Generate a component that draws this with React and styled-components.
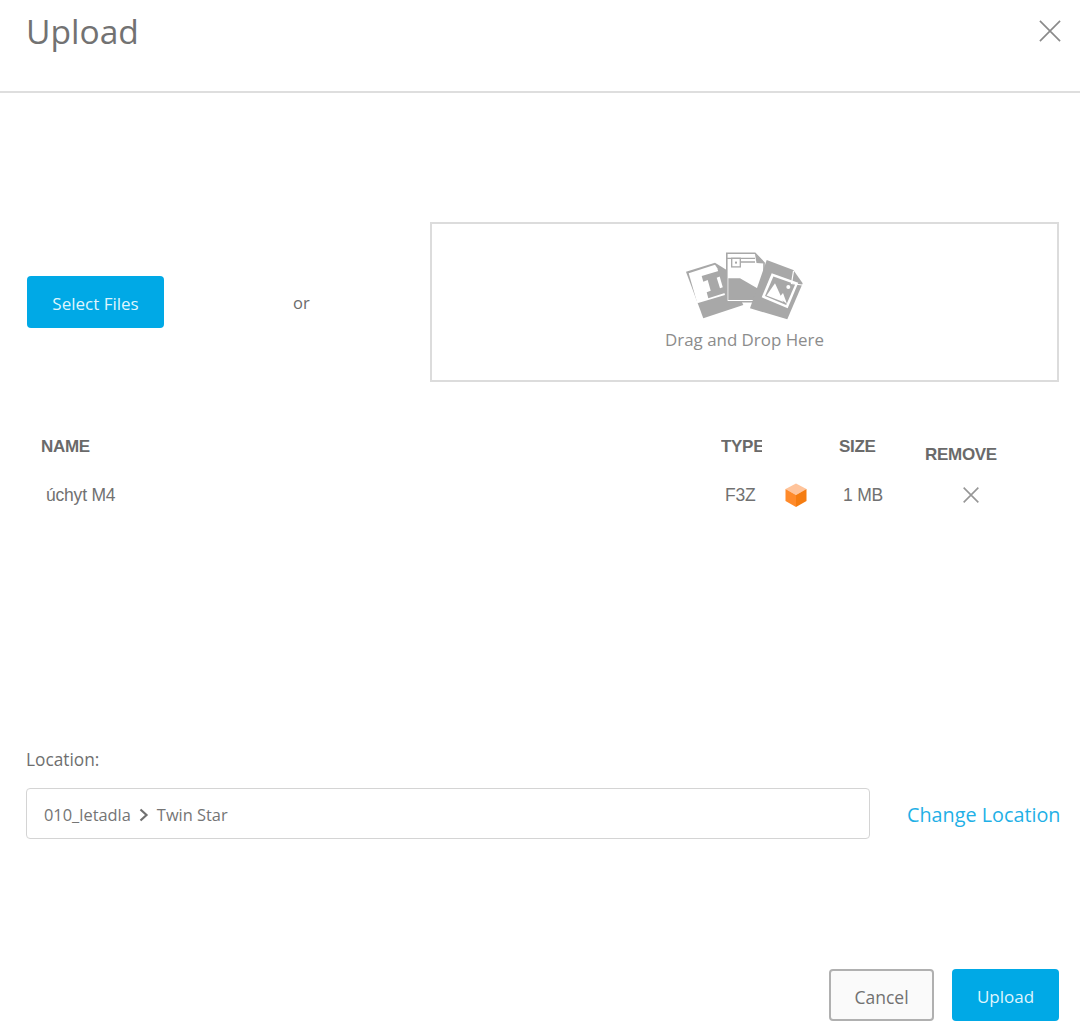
import React from "react";
import styled, { createGlobalStyle } from "styled-components";

const Global = createGlobalStyle`
  html, body { margin: 0; padding: 0; background: #fff; }
  body { font-family: "Open Sans", "Noto Sans", sans-serif; color: #6b6b6b; }
`;

const Page = styled.div`
  width: 1080px;
  height: 1035px;
  display: flex;
  flex-direction: column;
  overflow: hidden;
`;

const Header = styled.header`
  height: 91px;
  flex: none;
  border-bottom: 2px solid #dedede;
  display: flex;
  justify-content: space-between;
  align-items: flex-start;
  padding: 0 19px 0 26px;
`;

const Title = styled.h1`
  margin: 8px 0 0;
  font-size: 33.6px;
  line-height: 46px;
  font-weight: 400;
  color: #727272;
`;

const CloseButton = styled.button`
  border: 0;
  background: none;
  padding: 0;
  margin-top: 20px;
  width: 22px;
  height: 22px;
  display: flex;
`;

const Picker = styled.section`
  margin-top: 129px;
  padding: 0 21px 0 27px;
  display: grid;
  grid-template-columns: 137px 266px 629px;
  align-items: center;
  height: 160px;
`;

const PrimaryButton = styled.button`
  box-sizing: border-box;
  width: ${(p) => p.$width}px;
  height: 52px;
  border: 0;
  border-radius: 4px;
  background: #00a9e6;
  color: #dff5fd;
  font: 400 17px "Open Sans", sans-serif;
  padding: 3px 0 0;
`;

const OrLabel = styled.span`
  font-size: 16.5px;
  padding-left: 129px;
  color: #6b6b6b;
`;

const DropZone = styled.div`
  box-sizing: border-box;
  height: 160px;
  border: 2px solid #dcdcdc;
  display: flex;
  flex-direction: column;
  align-items: center;
  padding-top: 27px;
`;

const DropText = styled.span`
  margin-top: 8px;
  font-size: 16.9px;
  line-height: 22px;
  color: #8c8c8c;
`;

const FileGrid = styled.div`
  margin-top: 52px;
  display: grid;
  grid-template-columns: 680px 58px 60px 86px 1fr;
  padding-left: 41px;
  font-family: "Liberation Sans", Arial, sans-serif;
`;

const Head = styled.div`
  font-size: 17px;
  font-weight: 700;
  letter-spacing: -0.3px;
  line-height: 26px;
  height: 26px;
  color: #6a6a6a;
  white-space: nowrap;
  margin-top: ${(p) => (p.$low ? 8 : 0)}px;
  grid-column: ${(p) => p.$col};
`;

const ClippedHead = styled(Head)`
  width: 41px;
  overflow: hidden;
`;

const Cell = styled.div`
  font-size: 17.5px;
  letter-spacing: -0.2px;
  line-height: 24px;
  color: #717171;
  height: 24px;
  margin-top: 15px;
  padding-left: ${(p) => p.$indent || 0}px;
  grid-column: ${(p) => p.$col};
  display: flex;
  align-items: center;
`;

const Location = styled.section`
  margin-top: 243px;
  padding-left: 26px;
`;

const LocationLabel = styled.div`
  font-size: 17.3px;
  line-height: 20px;
  color: #6f6f6f;
`;

const LocationRow = styled.div`
  margin-top: 18px;
  display: flex;
  align-items: center;
  gap: 37px;
`;

const PathField = styled.div`
  box-sizing: border-box;
  width: 844px;
  height: 51px;
  border: 1px solid #d4d4d4;
  border-radius: 4px;
  padding: 2px 0 0 17px;
  display: flex;
  align-items: center;
  gap: 8px;
  font-size: 16.4px;
  color: #757575;
`;

const ChangeLink = styled.a`
  font-size: 19.8px;
  padding-top: 2px;
  color: #1fb0e6;
  white-space: nowrap;
`;

const Footer = styled.footer`
  margin-top: 130px;
  display: flex;
  justify-content: flex-end;
  gap: 18px;
  padding-right: 21px;
`;

const CancelButton = styled.button`
  box-sizing: border-box;
  width: 105px;
  height: 52px;
  border: 2px solid #b0b0b0;
  border-radius: 4px;
  background: #fafafa;
  color: #717171;
  font: 400 17.5px "Open Sans", sans-serif;
  padding: 3px 0 0;
`;

const CloseIcon = ({ size = 22, color = "#8a8a8a", width = 1.8 }) => (
  <svg width={size} height={size} viewBox="0 0 24 24" fill="none">
    <path d="M1 1 L23 23 M23 1 L1 23" stroke={color} strokeWidth={width} />
  </svg>
);

const G = "#a8a8a8";

const FilesIcon = () => (
  <svg width="118" height="70" viewBox="686 251 118 70">
    <path d="M686 271.7 L715 262.7 L726.7 270 L743.3 305 L703.3 318.3 Z" fill={G} />
    <path d="M688.7 273.3 L715 264.7 L717.3 268.3 L725 295 L697.3 303.3 Z" fill="#fff" />
    <path d="M726.8 253.3 L755 253.3 L764 262.7 L764 301.7 L726.8 301.7 Z" fill="#fff" stroke={G} strokeWidth="1.6" />
    <path d="M701.7 276 L719.3 270.7 L721 276 L716.7 277.7 L720 288.3 L724 286.7 L725.6 292.7 L708.3 298.3 L706.7 292.3 L710.7 290.7 L707.7 280 L703.3 281.7 Z" fill={G} />
    <path d="M728.3 278.3 L740 278.3 L762 291 L762 300 L728.3 300 Z" fill={G} />
    <path d="M755 254 L756.5 263 L765 263.5 Z" fill={G} />
    <path d="M727 258.3 L755 258.3 M740 262 L755 262" stroke={G} strokeWidth="1.3" fill="none" />
    <rect x="731.7" y="258.3" width="8.6" height="8.6" fill="#fff" stroke={G} strokeWidth="1.3" />
    <rect x="735" y="261.6" width="2" height="2" fill={G} />
    <path d="M766.7 260 L793.3 270 L802.7 283.3 L787.3 319.3 L750 308.3 Z" fill={G} />
    <path d="M771.7 273.3 L798.3 282.7 L787.7 308.3 L761.7 297.3 Z" fill="#fff" />
    <path d="M773.4 276.5 L795.2 284.2 L786.2 305 L765 296 Z" fill={G} />
    <path d="M766.5 295.5 L775 283.3 L783.5 302 Z" fill="#fff" />
    <path d="M779 297.5 L783 293 L787 304 Z" fill="#fff" />
    <circle cx="788.3" cy="287" r="2" fill="#fff" />
    <path d="M793.5 271 L791.5 283.5 L802 285" stroke="#fff" strokeWidth="1.2" fill="none" />
  </svg>
);

const CubeIcon = () => (
  <svg width="22" height="24" viewBox="0 0 22 24">
    <path d="M11 0.5 L21.5 6 L11 12 L0.5 6 Z" fill="#ffc49b" />
    <path d="M0.5 6 L11 12 L11 24 L0.5 18 Z" fill="#ff8a2a" />
    <path d="M21.5 6 L11 12 L11 24 L21.5 18 Z" fill="#f57c10" />
  </svg>
);

const ChevronIcon = () => (
  <svg width="10" height="14" viewBox="0 0 10 14" fill="none">
    <path d="M1.5 1.5 L7.5 7 L1.5 12.5" stroke="#707070" strokeWidth="2.2" />
  </svg>
);

export default function App() {
  return (
    <Page>
      <Global />
      <Header>
        <Title>Upload</Title>
        <CloseButton aria-label="Close">
          <CloseIcon />
        </CloseButton>
      </Header>

      <Picker>
        <PrimaryButton $width={137}>Select Files</PrimaryButton>
        <OrLabel>or</OrLabel>
        <DropZone>
          <FilesIcon />
          <DropText>Drag and Drop Here</DropText>
        </DropZone>
      </Picker>

      <FileGrid>
        <Head $col={1}>NAME</Head>
        <ClippedHead $col={2}>TYPE</ClippedHead>
        <Head $col={4}>SIZE</Head>
        <Head $col={5} $low>REMOVE</Head>
        <Cell $col={1} $indent={5}>úchyt M4</Cell>
        <Cell $col={2} $indent={4}>F3Z</Cell>
        <Cell $col={3} $indent={6}><CubeIcon /></Cell>
        <Cell $col={4} $indent={4}>1 MB</Cell>
        <Cell $col={5} $indent={38}><CloseIcon size={16} color="#969696" width={2.4} /></Cell>
      </FileGrid>

      <Location>
        <LocationLabel>Location:</LocationLabel>
        <LocationRow>
          <PathField>
            010_letadla <ChevronIcon /> Twin Star
          </PathField>
          <ChangeLink>Change Location</ChangeLink>
        </LocationRow>
      </Location>

      <Footer>
        <CancelButton>Cancel</CancelButton>
        <PrimaryButton $width={107}>Upload</PrimaryButton>
      </Footer>
    </Page>
  );
}
